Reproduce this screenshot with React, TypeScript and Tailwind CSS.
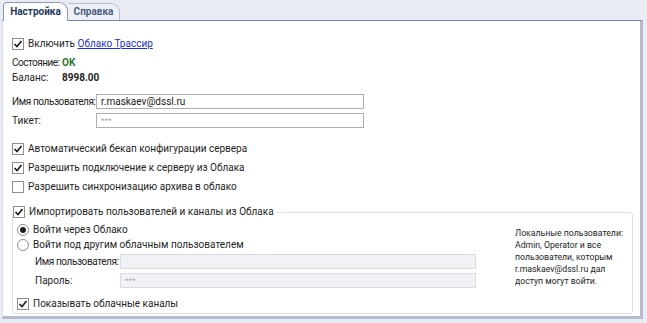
import { FC, ReactNode } from "react";

const Check: FC<{ checked?: boolean }> = ({ checked }) => (
    <span className="flex-none w-[12px] h-[12px] border border-[#8e8f8f] bg-white flex items-center justify-center">
        {checked && (
            <svg width="10" height="10" viewBox="0 0 10 10">
                <path d="M1.5 5 L4 7.5 L8.5 2" fill="none" stroke="#1a1a1a" strokeWidth="1.6" />
            </svg>
        )}
    </span>
);

const Radio: FC<{ checked?: boolean }> = ({ checked }) => (
    <span className="flex-none w-[12px] h-[12px] rounded-full border border-[#8e8f8f] bg-white flex items-center justify-center">
        {checked && <span className="w-[6px] h-[6px] rounded-full bg-[#1f1f1f]" />}
    </span>
);

const CheckRow: FC<{ checked?: boolean; children: ReactNode }> = ({ checked, children }) => (
    <div className="flex items-center gap-[4px] h-[14px] whitespace-nowrap">
        <Check checked={checked} />
        <span>{children}</span>
    </div>
);

const Field: FC<{ value?: string; muted?: boolean; disabled?: boolean; className?: string }> = ({ value, muted, disabled, className }) => (
    <div
        className={`flex-none h-[15px] border flex items-center px-[4px] leading-none ${
            disabled ? "bg-[#f1f2f5] border-[#d8dbe1]" : "bg-white border-[#abadb3]"
        } ${muted ? "text-[#a6a6a6] text-[8px]" : "text-[#1a1a1a]"} ${className ?? ""}`}
    >
        {value}
    </div>
);

export default function App() {
    return (
        <div
            className="w-[647px] h-[323px] bg-[#e9ecf3] flex flex-col text-[10px] leading-[14px] text-[#1e1e1e] overflow-hidden"
            style={{ fontFamily: 'Roboto, "Noto Sans", sans-serif' }}
        >
            {/* TABS */}
            <div className="flex-none h-[20px] flex items-end pl-[3px]">
                <div className="relative z-10 h-[19px] w-[65px] bg-white border border-b-0 border-[#8b9bbd] rounded-tl-[4px] rounded-tr-[9px] flex items-center justify-center font-bold text-[#1e395b] -mb-px">
                    Настройка
                </div>
                <div className="h-[17px] w-[52px] bg-[#eef0f5] border border-b-0 border-l-0 border-[#b4bed1] rounded-tr-[9px] flex items-center justify-center font-bold text-[#4a5f80]">
                    Справка
                </div>
            </div>

            {/* CONTENT */}
            <div className="flex-none h-[299px] w-[641px] ml-[2px] bg-white border-t border-[#7185b0] border-l border-l-[#d6dbe5] border-r-[3px] border-r-[#b3bbcd] border-b-[3px] border-b-[#b3bbcd] pl-[9px] pr-[7px] pt-[16px] flex flex-col">
                <CheckRow checked>
                    Включить <span className="text-[#1a33cc] underline">Облако Трассир</span>
                </CheckRow>

                <div className="mt-[5px] flex items-center h-[14px] whitespace-nowrap">
                    <span className="flex-none w-[50px] tracking-[-0.5px]">Состояние:</span>
                    <span className="font-bold text-[#2a7a2a]">OK</span>
                </div>
                <div className="mt-[1px] flex items-center h-[14px] whitespace-nowrap">
                    <span className="flex-none w-[50px]">Баланс:</span>
                    <span className="font-bold">8998.00</span>
                </div>

                <div className="mt-[9px] flex items-center whitespace-nowrap">
                    <span className="flex-none w-[84px] tracking-[-0.4px]">Имя пользователя:</span>
                    <Field value="r.maskaev@dssl.ru" className="w-[268px]" />
                </div>
                <div className="mt-[4px] flex items-center">
                    <span className="flex-none w-[84px]">Тикет:</span>
                    <Field value="***" muted className="w-[268px]" />
                </div>

                <div className="mt-[14px] flex flex-col gap-[5px]">
                    <CheckRow checked>Автоматический бекап конфигурации сервера</CheckRow>
                    <CheckRow checked>Разрешить подключение к серверу из Облака</CheckRow>
                    <CheckRow>Разрешить синхронизацию архива в облако</CheckRow>
                </div>

                {/* GROUP BOX */}
                <div className="relative mt-[18px] border border-[#dcdfe5] rounded-[3px] h-[102px] pl-[4px] pr-[8px] pt-[10px] flex">
                    <div className="absolute -top-[8px] left-[0px] bg-white pr-[2px]">
                        <CheckRow checked>Импортировать пользователей и каналы из Облака</CheckRow>
                    </div>

                    <div className="flex-1 flex flex-col whitespace-nowrap">
                        <div className="flex items-center gap-[4px] h-[14px]">
                            <Radio checked />
                            <span>Войти через Облако</span>
                        </div>
                        <div className="mt-[1px] flex items-center gap-[4px] h-[14px]">
                            <Radio />
                            <span>Войти под другим облачным пользователем</span>
                        </div>
                        <div className="mt-[2px] pl-[18px] flex items-center">
                            <span className="flex-none w-[85px] tracking-[-0.4px]">Имя пользователя:</span>
                            <Field disabled className="w-[356px]" />
                        </div>
                        <div className="mt-[4px] pl-[18px] flex items-center">
                            <span className="flex-none w-[85px]">Пароль:</span>
                            <Field disabled muted value="***" className="w-[356px]" />
                        </div>
                        <div className="mt-[9px]">
                            <CheckRow checked>Показывать облачные каналы</CheckRow>
                        </div>
                    </div>

                    <div className="flex-none w-[109px] pt-[4px] text-[8.7px] leading-[12px] whitespace-nowrap">
                        Локальные пользователи:
                        <br />
                        Admin, Operator и все
                        <br />
                        пользователи, которым
                        <br />
                        r.maskaev@dssl.ru дал
                        <br />
                        доступ могут войти.
                    </div>
                </div>
            </div>
        </div>
    );
}
